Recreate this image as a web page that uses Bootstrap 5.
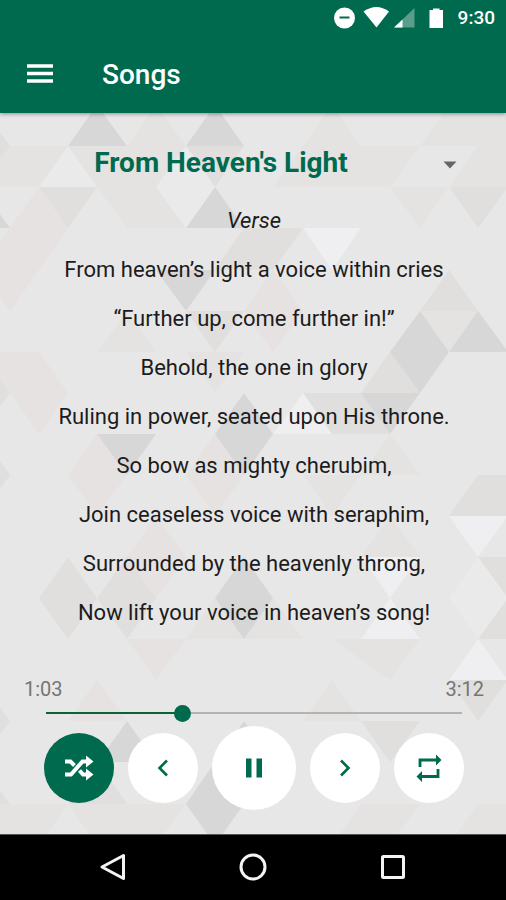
<!DOCTYPE html>
<html lang="en">
<head>
<meta charset="utf-8">
<meta name="viewport" content="width=device-width, initial-scale=1">
<title>Songs</title>
<link href="https://cdn.jsdelivr.net/npm/bootstrap@5.3.0/dist/css/bootstrap.min.css" rel="stylesheet">
<style>
  :root { --brand: #006a4e; }
  body { font-family: Roboto, "Open Sans", sans-serif; background: #e8e7e8; color: #1c1c1c; }
  .app-head { background: var(--brand); box-shadow: 0 1px 4px rgba(0,0,0,.4); z-index: 2; }
  .status { height: 36px; padding-right: 11px; gap: 12px; font-size: 19px; font-weight: 500; line-height: 36px; }
  .toolbar { height: 77px; padding: 0 24px; gap: 46px; }
  .toolbar h1 { font-size: 28px; font-weight: 500; line-height: 32px; }
  .plain-btn { background: none; border: 0; padding: 0; color: inherit; line-height: 0; }
  .backdrop { position: absolute; inset: 0; width: 100%; height: 100%; z-index: -1; }
  .stage { z-index: 1; padding: 27px 22px 24px 24px; }
  .song-pick select {
    appearance: none; background: none; border: 0; width: 100%; height: 46px;
    padding: 0 66px 0 0; color: var(--brand); font-size: 28px; font-weight: 700;
    text-align: center; text-align-last: center;
  }
  .song-pick svg { position: absolute; right: 27px; top: 21px; pointer-events: none; }
  .lyrics { margin-top: 10px; font-size: 22px; line-height: 49px; text-align: center; }
  .times { font-size: 20px; line-height: 24px; color: #757575; }
  .seek {
    appearance: none; display: block; height: 24px; margin: 0 14px; border: 0;
    background: linear-gradient(to right, #0a6338 var(--played), #b4b2b3 var(--played)) center / calc(100% - 16px) 2px no-repeat;
  }
  .seek::-webkit-slider-thumb { appearance: none; width: 17px; height: 17px; border-radius: 50%; background: var(--brand); }
  .controls { gap: 14px; margin-top: 1px; }
  .round {
    width: 70px; height: 70px; border: 0; border-radius: 50%; padding: 0;
    display: flex; align-items: center; justify-content: center;
    background: #fff; color: var(--brand);
  }
  .round.play { width: 84px; height: 84px; }
  .round.on { background: var(--brand); color: #fff; }
  .sysbar { height: 66px; padding-bottom: 2px; background: #000; border-top: 1px solid #555; color: #f4f4f4; gap: 112px; }
</style>
</head>
<body class="d-flex flex-column min-vh-100">

<header class="app-head position-relative text-white">
  <div class="status d-flex justify-content-end align-items-center">
    <svg width="114" height="24" viewBox="331 6 114 24" aria-hidden="true">
      <circle cx="343.500" cy="18" r="10.500" fill="#fff"/>
      <path d="M338.500 17.500h10" stroke="#006a4e" stroke-width="2"/>
      <path d="M362.500 11.500Q375.500 2.500 388 11.500L375.500 27.500z" fill="#fff"/>
      <path d="M413.500 8v19.500H393z" fill="#fff" opacity=".35"/>
      <path d="M401.500 19.500v8H393z" fill="#fff"/>
      <path d="M428.500 10h3.500V8.500h6.500V10h3.500v18h-13.500z" fill="#fff"/>
    </svg>
    <span>9:30</span>
  </div>
  <div class="toolbar d-flex align-items-center">
    <button type="button" class="plain-btn" aria-label="Open menu">
      <svg width="32" height="32" viewBox="0 0 32 32"><path d="M3 7h26M3 14.500h26M3 22h26" stroke="currentColor" stroke-width="3.500"/></svg>
    </button>
    <h1 class="m-0">Songs</h1>
  </div>
</header>

<main class="stage position-relative flex-grow-1 d-flex flex-column">
  <svg class="backdrop" viewBox="0 113 506 721" preserveAspectRatio="xMidYMin slice" aria-hidden="true">
    <g fill="#e4e3e2">
      <path d="M10 146H68L39 187H-20zM68 146H186L156 187H97zM97 187H156L186 228H127zM127 146L156 105L186 146zM303 146H420L390 187H273zM478 146H537V187H449zM390 187H449L420 228zM303 146L332 105L361 146zM420 146L449 105H508L537 146zM420 311H478L449 352zM98 352L127 311L156 352zM186 352H244L215 393zM390 434L420 475H361zM303 475H361L332 516zM361 557L390 516L420 557zM186 639L215 598H273L303 639zM303 721L332 680L361 721zM0 804H68L39 845H0zM68 804H186L156 845H97zM332 845L361 804H420L390 845zM449 845L478 804H537V845zM332 639H420L390 680z"/>
    </g>
    <g fill="#e5e2e1">
      <path d="M39 187L68 228L39 270L10 311L-20 270zM-20 352H39L68 393L39 434L10 393zM68 475L97 434L127 475L97 516zM127 557L156 516L186 557L156 598zM68 721L97 680L127 721zM244 311L273 270L303 311L273 352zM127 639H186L156 680zM186 475L215 434L244 475L215 516z"/>
    </g>
    <g fill="#dddcda">
      <path d="M39 187H97L68 228zM-20 105L10 146L-20 187zM215 187L186 146H244zM244 228H303L273 270zM244 228L215 270H273zM186 311H244L215 352zM449 187H508L478 228zM420 311L449 270L478 311zM361 393L390 352L420 393zM303 393H361L390 434H332zM-20 352L10 393L-20 434zM-20 434L10 475L-20 516zM449 516L478 475H537L508 516zM39 598L68 557L97 598L68 639zM97 598L127 557L156 598L127 639zM478 557H537L508 598zM508 598L537 639H478zM361 721H420L390 762zM449 680H508L478 721zM-20 680L10 721L-20 762zM-20 762L10 804H-20zM68 804L97 762L127 804z" opacity=".75"/>
    </g>
    <g fill="#d5d3d4">
      <path d="M68 146L97 105L127 146zM186 146L215 105L244 146zM186 228L215 187L244 228zM-49 228L-20 187L10 228zM156 270H215L186 311zM390 352L420 311L449 352L420 393zM449 352L478 311L508 352zM361 393H420L390 434zM97 434H156L127 475zM215 434L244 393L273 434L244 475zM215 598L244 557L273 598L244 639zM98 762L127 721L156 762zM186 804L215 762L244 804L215 845zM215 762L244 721L273 762z" opacity=".85"/>
    </g>
    <g fill="#f0eff1">
      <path d="M303 228H361L332 270zM273 434L303 393L332 434zM449 516H508L478 557zM361 639L390 598L420 639zM361 557H420L390 598zM449 680L478 639L508 680z" opacity=".85"/>
      <path d="M449 598L478 557L508 598L478 639zM39 187L68 146L97 187zM156 187L186 228L215 187L186 146z" opacity=".4"/>
    </g>
  </svg>

  <div class="song-pick position-relative">
    <select aria-label="Song">
      <option>From Heaven's Light</option>
    </select>
    <svg width="14" height="8" viewBox="0 0 14 8" aria-hidden="true"><path d="M.500.500h13L7 7.500z" fill="#666"/></svg>
  </div>

  <div class="lyrics">
    <p class="m-0 fst-italic">Verse</p>
    <p class="m-0">From heaven’s light a voice within cries</p>
    <p class="m-0">“Further up, come further in!”</p>
    <p class="m-0">Behold, the one in glory</p>
    <p class="m-0">Ruling in power, seated upon His throne.</p>
    <p class="m-0">So bow as mighty cherubim,</p>
    <p class="m-0">Join ceaseless voice with seraphim,</p>
    <p class="m-0">Surrounded by the heavenly throng,</p>
    <p class="m-0">Now lift your voice in heaven’s song!</p>
  </div>

  <div class="mt-auto">
    <div class="times d-flex justify-content-between">
      <span>1:03</span><span>3:12</span>
    </div>
    <div class="d-flex">
      <input class="seek flex-grow-1" style="--played:32.8%" type="range" min="0" max="192" value="63" aria-label="Position in song">
    </div>
    <div class="controls d-flex justify-content-center align-items-center">
      <button type="button" class="round on" aria-label="Shuffle" aria-pressed="true">
        <svg width="30" height="26" viewBox="0 0 30 26">
          <path d="M1 6.500H6.500L10.500 10.500M1 19.500H7L18.500 6.500H23M15.500 15.500L19 19.500H23" fill="none" stroke="currentColor" stroke-width="4"/>
          <path d="M22 .500L29.500 6.500L22 12.500zM22 13.500L29.500 19.500L22 25.500z" fill="currentColor"/>
        </svg>
      </button>
      <button type="button" class="round" aria-label="Previous">
        <svg width="12" height="18" viewBox="0 0 12 18"><path d="M10 1.500L2.500 9L10 16.500" fill="none" stroke="currentColor" stroke-width="2.600"/></svg>
      </button>
      <button type="button" class="round play" aria-label="Pause">
        <svg width="18" height="20" viewBox="0 0 18 20"><path d="M1 .500h5.500v19H1zM11.500.500H17v19h-5.500z" fill="currentColor"/></svg>
      </button>
      <button type="button" class="round" aria-label="Next">
        <svg width="12" height="18" viewBox="0 0 12 18"><path d="M2 1.500L9.500 9L2 16.500" fill="none" stroke="currentColor" stroke-width="2.600"/></svg>
      </button>
      <button type="button" class="round" aria-label="Repeat">
        <svg width="26" height="28" viewBox="0 0 26 28">
          <path d="M4 13V6H20M22 15V22.500H6" fill="none" stroke="currentColor" stroke-width="2.800"/>
          <path d="M20 .500L25.500 6L20 11.500zM6 17L.500 22.500L6 28z" fill="currentColor"/>
        </svg>
      </button>
    </div>
  </div>
</main>

<nav class="sysbar d-flex justify-content-center align-items-center" aria-label="System">
  <button type="button" class="plain-btn" aria-label="Back">
    <svg width="28" height="28" viewBox="0 0 28 28"><path d="M24.500 2.500V25.500L3 14z" fill="none" stroke="currentColor" stroke-width="3" stroke-linejoin="round"/></svg>
  </button>
  <button type="button" class="plain-btn" aria-label="Home">
    <svg width="28" height="28" viewBox="0 0 28 28"><circle cx="14" cy="14" r="12" fill="none" stroke="currentColor" stroke-width="3"/></svg>
  </button>
  <button type="button" class="plain-btn" aria-label="Recent apps">
    <svg width="28" height="28" viewBox="0 0 28 28"><rect x="3.500" y="3.500" width="21" height="21" rx="1" fill="none" stroke="currentColor" stroke-width="3"/></svg>
  </button>
</nav>

<script src="https://cdn.jsdelivr.net/npm/bootstrap@5.3.0/dist/js/bootstrap.bundle.min.js"></script>
</body>
</html>
